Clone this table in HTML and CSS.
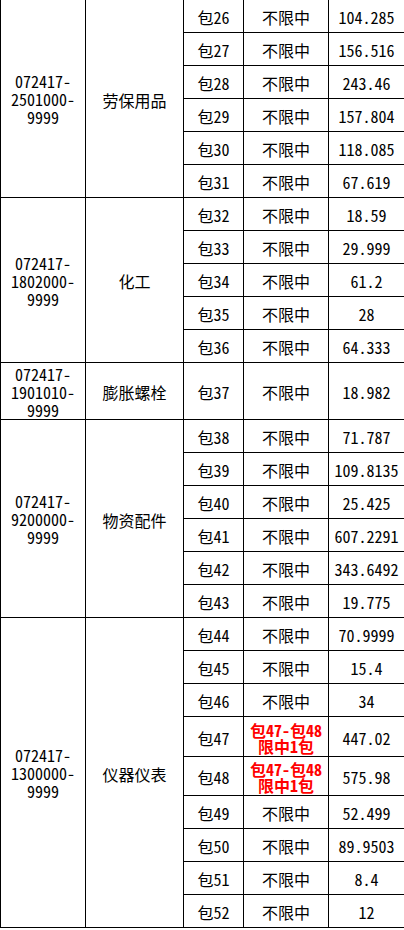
FILE: index.html
```html
<!DOCTYPE html>
<html lang="zh-CN">
<head>
<meta charset="utf-8">
<title>包件清单</title>
<link rel="stylesheet" href="styles.css">
</head>
<body>
<table class="grid">
  <colgroup>
    <col class="c-code">
    <col class="c-name">
    <col class="c-pkg">
    <col class="c-lim">
    <col class="c-val">
  </colgroup>
  <tbody>
    <tr><td class="code" rowspan="6">072417-<wbr>2501000-<wbr>9999</td><td rowspan="6">劳保用品</td><td>包26</td><td>不限中</td><td>104.285</td></tr>
    <tr><td>包27</td><td>不限中</td><td>156.516</td></tr>
    <tr><td>包28</td><td>不限中</td><td>243.46</td></tr>
    <tr><td>包29</td><td>不限中</td><td>157.804</td></tr>
    <tr><td>包30</td><td>不限中</td><td>118.085</td></tr>
    <tr><td>包31</td><td>不限中</td><td>67.619</td></tr>

    <tr><td class="code" rowspan="5">072417-<wbr>1802000-<wbr>9999</td><td rowspan="5">化工</td><td>包32</td><td>不限中</td><td>18.59</td></tr>
    <tr><td>包33</td><td>不限中</td><td>29.999</td></tr>
    <tr><td>包34</td><td>不限中</td><td>61.2</td></tr>
    <tr><td>包35</td><td>不限中</td><td>28</td></tr>
    <tr><td>包36</td><td>不限中</td><td>64.333</td></tr>

    <tr class="tall"><td class="code">072417-<wbr>1901010-<wbr>9999</td><td>膨胀螺栓</td><td>包37</td><td>不限中</td><td>18.982</td></tr>

    <tr><td class="code" rowspan="6">072417-<wbr>9200000-<wbr>9999</td><td rowspan="6">物资配件</td><td>包38</td><td>不限中</td><td>71.787</td></tr>
    <tr><td>包39</td><td>不限中</td><td>109.8135</td></tr>
    <tr><td>包40</td><td>不限中</td><td>25.425</td></tr>
    <tr><td>包41</td><td>不限中</td><td>607.2291</td></tr>
    <tr><td>包42</td><td>不限中</td><td>343.6492</td></tr>
    <tr><td>包43</td><td>不限中</td><td>19.775</td></tr>

    <tr><td class="code" rowspan="9">072417-<wbr>1300000-<wbr>9999</td><td rowspan="9">仪器仪表</td><td>包44</td><td>不限中</td><td>70.9999</td></tr>
    <tr><td>包45</td><td>不限中</td><td>15.4</td></tr>
    <tr><td>包46</td><td>不限中</td><td>34</td></tr>
    <tr class="note-a"><td>包47</td><td class="note">包47-包48<br>限中1包</td><td>447.02</td></tr>
    <tr class="note-b"><td>包48</td><td class="note">包47-包48<br>限中1包</td><td>575.98</td></tr>
    <tr><td>包49</td><td>不限中</td><td>52.499</td></tr>
    <tr><td>包50</td><td>不限中</td><td>89.9503</td></tr>
    <tr><td>包51</td><td>不限中</td><td>8.4</td></tr>
    <tr><td>包52</td><td>不限中</td><td>12</td></tr>
  </tbody>
</table>
</body>
</html>
```

FILE: styles.css
```css
html, body {
  margin: 0;
  padding: 0;
  background: #fff;
}

.grid {
  border-collapse: collapse;
  table-layout: fixed;
  width: 404px;
  margin-top: -1px;
  font-family: "Noto Sans Mono CJK SC", "Noto Sans CJK SC", "DejaVu Sans Mono", monospace;
  font-size: 16px;
  line-height: 18px;
  color: #000;
}

.c-code { width: 85px; }
.c-name { width: 98px; }
.c-pkg  { width: 60px; }
.c-lim  { width: 85px; }
.c-val  { width: 76px; }

.grid td {
  border: 1px solid #000;
  padding: 2px 0 0 0;
  height: 31px;
  text-align: center;
  vertical-align: middle;
  box-sizing: border-box;
}

.grid tr { height: 33px; }
.grid tr.tall { height: 57px; }
.grid tr.note-a { height: 40px; }
.grid tr.note-b { height: 39px; }

.grid td.code {
  padding: 1px 0 0 0;
}

.grid td.note {
  color: #f00;
  font-weight: bold;
  line-height: 16px;
}
```
